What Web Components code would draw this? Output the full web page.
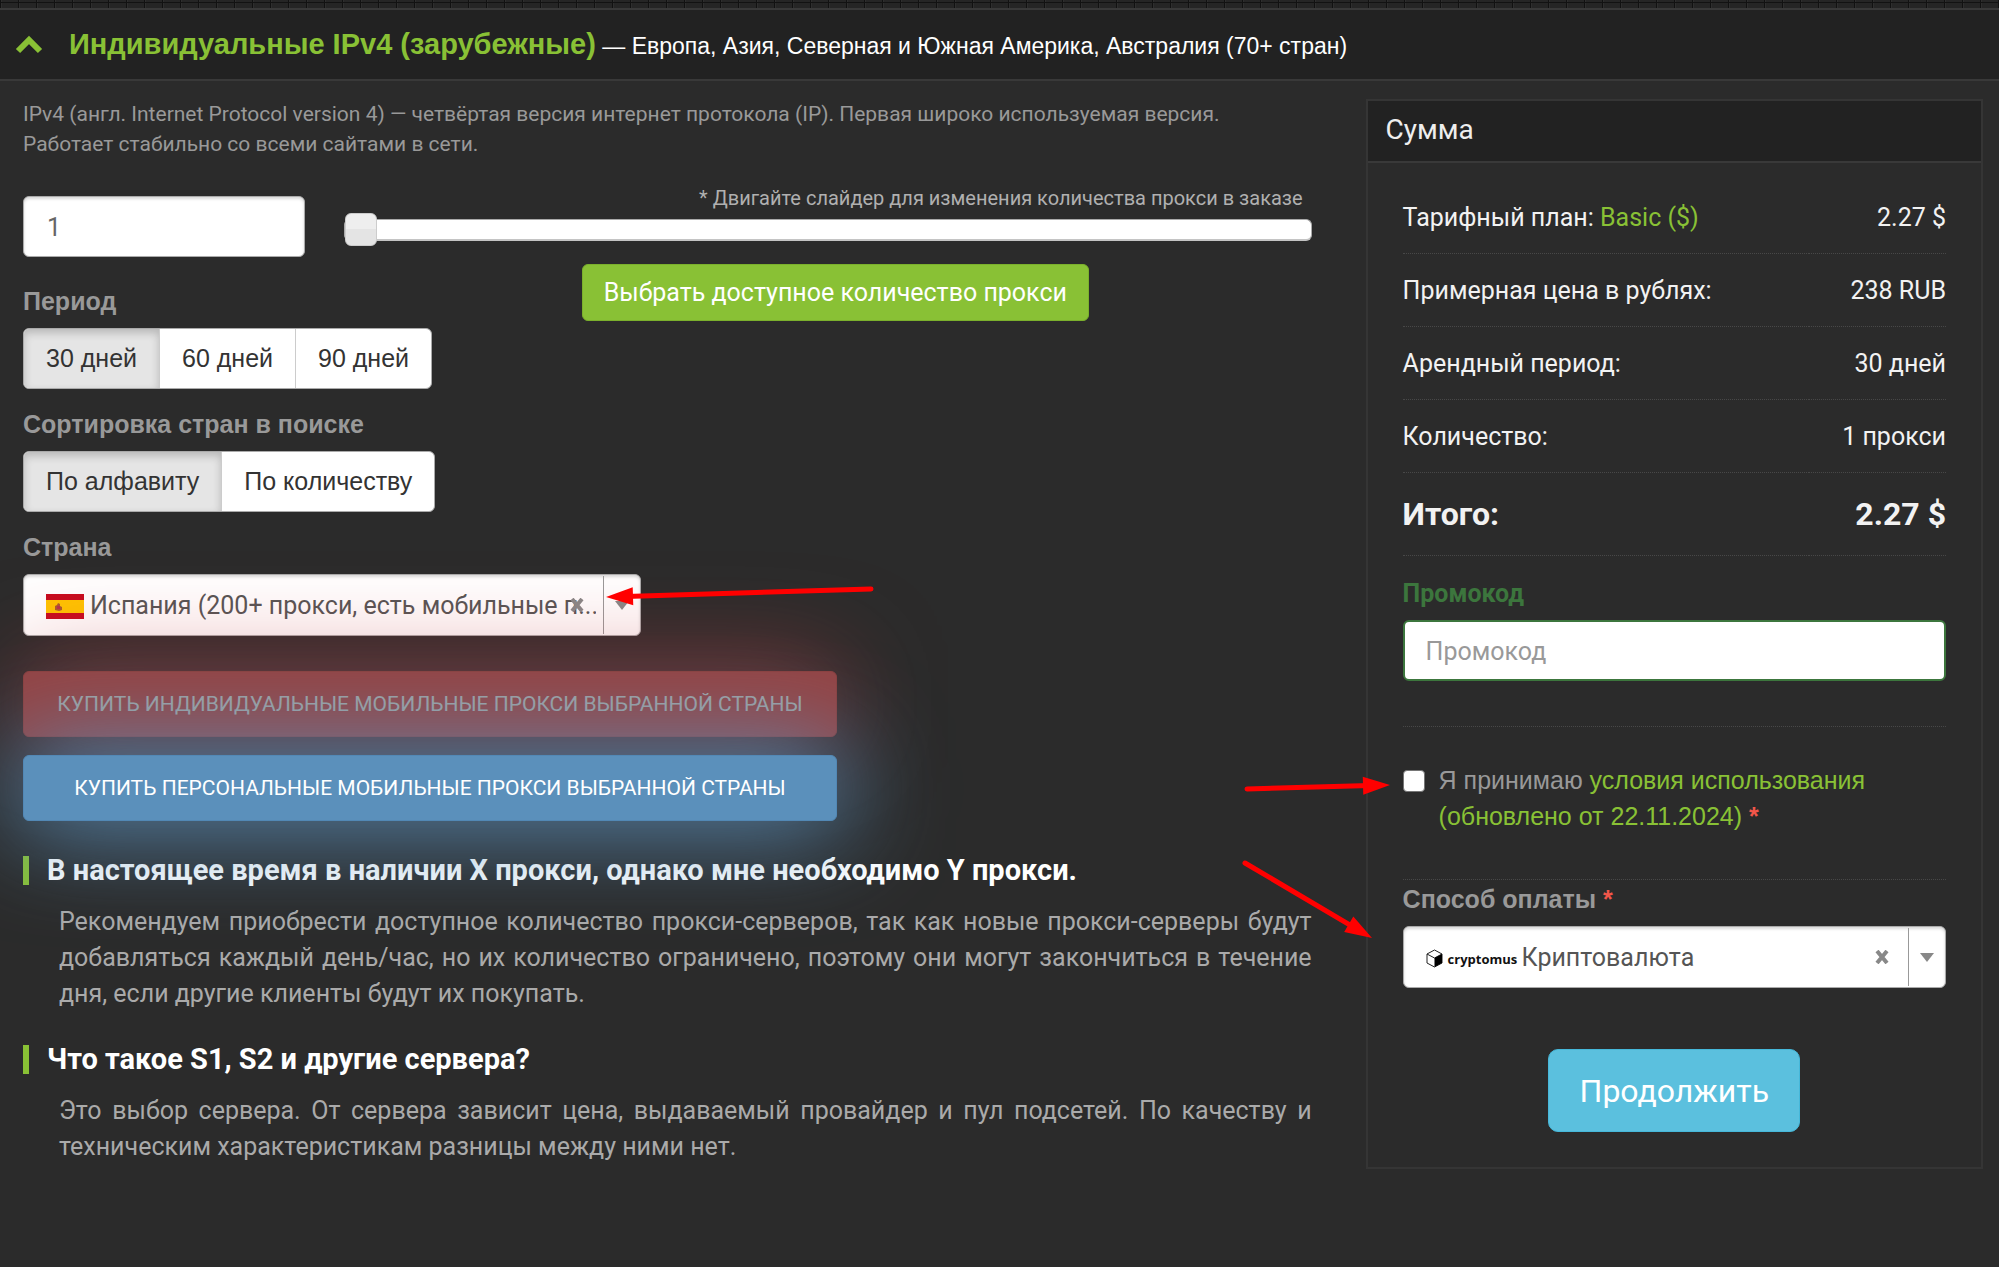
<!DOCTYPE html>
<html lang="ru">
<head>
<meta charset="utf-8">
<meta name="viewport" content="width=device-width, initial-scale=1">
<title>Индивидуальные IPv4</title>
<style>
  html { background: #2b2b2b; }
  body {
    margin: 0;
    color: #999;
    font: 25px/36px Roboto, "Liberation Sans", sans-serif;
    --arial: "Liberation Sans", Arial, sans-serif;
    --green: #89c135;
    --line: #393939;
    --star: #f2564a;
  }
</style>
</head>
<body>
<proxy-page></proxy-page>

<script>
const define = (name, html, init) => {
  const tpl = document.createElement('template');
  tpl.innerHTML = html;
  customElements.define(name, class extends HTMLElement {
    constructor() {
      super();
      this.attachShadow({ mode: 'open' }).append(tpl.content.cloneNode(true));
    }
    connectedCallback() { if (init) init(this, this.shadowRoot); }
  });
};

/* Red annotation arrow, placed by its host over the content it points at */
define('pointer-arrow', `
  <style>
    :host { display: block; position: absolute; z-index: 5; pointer-events: none; }
    svg { display: block; overflow: visible; }
  </style>
  <svg width="1" height="1" aria-hidden="true">
    <line stroke="#f00" stroke-width="5" stroke-linecap="round"/>
    <polygon fill="#f00" points="0,0 -27,-9 -27,9"/>
  </svg>`, (host, root) => {
  const dx = +host.getAttribute('dx'), dy = +host.getAttribute('dy');
  const len = Math.hypot(dx, dy), k = (len - 20) / len;
  const line = root.querySelector('line');
  line.setAttribute('x1', -dx); line.setAttribute('y1', -dy);
  line.setAttribute('x2', -dx + dx * k); line.setAttribute('y2', -dy + dy * k);
  root.querySelector('polygon').setAttribute('transform', 'rotate(' + Math.atan2(dy, dx) * 180 / Math.PI + ')');
});

define('page-heading', `
  <style>
    :host { display: block; }
    .grid {
      height: 8px; background-color: #252525;
      background-image: linear-gradient(#121212, #121212), repeating-linear-gradient(90deg, #111 0 1px, #2e2e2e 1px 2px, transparent 2px 18px);
      background-size: 100% 1px, 100% 100%; background-position: 0 2px, 0 0; background-repeat: no-repeat;
    }
    header {
      display: flex; align-items: center; gap: 26px; box-sizing: border-box; min-height: 73px; padding: 0 15px;
      background: #222; border-top: 2px solid var(--line); border-bottom: 2px solid var(--line);
    }
    h1 { margin: 0; font: 400 23px/36px var(--arial); color: #fff; }
    strong { font: 700 29px/36px var(--arial); color: var(--green); }
    svg { flex: none; }
  </style>
  <div class="grid"></div>
  <header>
    <svg width="28" height="20" viewBox="0 0 28 20" aria-hidden="true"><path d="M3 16 14 5 25 16" fill="none" stroke="#89c135" stroke-width="6"/></svg>
    <h1><strong>Индивидуальные IPv4 (зарубежные)</strong> — Европа, Азия, Северная и Южная Америка, Австралия (70+ стран)</h1>
  </header>`);

/* Row of joined radio buttons */
define('segmented-choice', `
  <style>
    :host { display: block; }
    fieldset { margin: 0; padding: 0; border: 0; min-width: 0; }
    legend { padding: 0; margin-bottom: 10px; font: 700 25px/34px var(--arial); }
    .row { display: inline-flex; vertical-align: top; height: 61px; box-sizing: border-box; border: 1px solid #aaa; border-radius: 6px; overflow: hidden; background: #fff; }
    label { display: flex; align-items: center; padding: 0 22px 2px; color: #333; font: 25px/36px var(--arial); cursor: pointer; }
    label + label { border-left: 1px solid #ccc; }
    label:has(:checked) { background: #e5e5e5; box-shadow: inset 0 4px 9px rgba(0,0,0,.2); }
    input { position: absolute; opacity: 0; width: 1px; height: 1px; margin: 0; }
  </style>
  <fieldset><legend></legend><div class="row"></div></fieldset>`, (host, root) => {
  root.querySelector('legend').textContent = host.getAttribute('caption');
  const row = root.querySelector('.row');
  host.getAttribute('options').split('|').forEach((text, i) => {
    const label = document.createElement('label');
    const radio = document.createElement('input');
    radio.type = 'radio'; radio.name = 'choice'; radio.checked = i === 0;
    label.append(radio, text);
    row.append(label);
  });
});

/* Drop-down with an icon slot, a clear button and a divided arrow */
define('pick-list', `
  <style>
    :host { display: block; }
    label { display: block; margin-bottom: 10px; font: 700 25px/34px var(--arial); }
    i { font-style: normal; color: var(--star); }
    .box { position: relative; display: flex; align-items: center; height: 62px; box-sizing: border-box; background: #fff; border: 1px solid #aaa; border-radius: 6px; box-shadow: inset 0 2px 3px rgba(0,0,0,.15); }
    select { position: absolute; inset: 0; width: 100%; height: 100%; appearance: none; border: 0; background: none; color: #555; font: 25px/36px Roboto, sans-serif; padding: 2px 44px 0 var(--indent, 66px); }
    slot { display: flex; align-items: center; padding-top: 3px; }
    ::slotted(*) { pointer-events: none; margin-left: 22px; }
    button { position: absolute; right: 54px; display: grid; place-items: center; width: 18px; height: 30px; padding: 0; border: 0; background: none; color: #888; }
    .arrow { position: absolute; right: 0; width: 36px; height: 58px; border-left: 1px solid #999; display: grid; place-items: center; pointer-events: none; }
  </style>
  <label for="s"></label>
  <div class="box">
    <select id="s"><option></option></select>
    <slot></slot>
    <button type="button" aria-label="Очистить"><svg width="14" height="14" viewBox="0 0 14 14"><path d="M2 1 12 13M12 1 2 13" stroke="#888" stroke-width="4"/></svg></button>
    <span class="arrow"><svg width="14" height="9"><path d="M0 0H14L7 9Z" fill="#888"/></svg></span>
  </div>`, (host, root) => {
  root.querySelector('label').textContent = host.getAttribute('caption');
  if (host.hasAttribute('required')) {
    const star = document.createElement('i');
    star.textContent = ' *';
    root.querySelector('label').append(star);
  }
  root.querySelector('option').textContent = host.getAttribute('value');
});

define('amount-picker', `
  <style>
    :host { display: block; }
    label { display: block; text-align: right; padding-right: 9px; font: 400 20px/28px Roboto, sans-serif; color: #b0b0b0; }
    input { display: block; appearance: none; width: 100%; height: 33px; margin: 1px 0 18px; background: none; }
    input::-webkit-slider-runnable-track { height: 22px; box-sizing: border-box; background: #fff; border: 1px solid #aaa; border-bottom: 2px solid #c4c4c4; border-radius: 6px; }
    input::-webkit-slider-thumb { appearance: none; width: 32px; height: 33px; box-sizing: border-box; margin-top: -7px; border: 1px solid #ccc; border-radius: 6px; background: linear-gradient(#eee 50%, #e4e4e4 50%); }
    .action { display: flex; justify-content: center; padding-left: 15px; }
    button { height: 57px; padding: 1px 21px 0; border: 1px solid #7bb02c; border-radius: 6px; background: var(--green); color: #fff; font: 25px/36px Roboto, sans-serif; }
  </style>
  <label for="r">* Двигайте слайдер для изменения количества прокси в заказе</label>
  <input id="r" type="range" min="1" max="200" value="1">
  <div class="action"><button type="button">Выбрать доступное количество прокси</button></div>`);

define('glow-button', `
  <style>
    :host { display: block; position: relative; z-index: 1; max-width: 814px; pointer-events: none; }
    :host([disabled]) { opacity: .65; }
    button { pointer-events: auto; width: 100%; height: 66px; padding: 0; border: 1px solid #5288b5; border-radius: 6px; background: #5b90bb; color: #fff; box-shadow: 0 0 100px 8px #5b90bb; font: 400 21px/36px Roboto, sans-serif; text-transform: uppercase; }
    :host([disabled]) button { border-color: #c24a48; background: #cc5150; color: #e2e2e2; box-shadow: 0 0 100px #cc4448; }
  </style>
  <button type="button"><slot></slot></button>`);

define('faq-item', `
  <style>
    :host { display: block; }
    h2 { margin: 0 0 19px; padding-left: 18px; border-left: 6px solid var(--green); font: 700 29px/29px Roboto, sans-serif; color: #fff; }
    p { margin: 0; padding-left: 36px; color: #aaa; text-align: justify; }
  </style>
  <h2><slot name="question"></slot></h2>
  <p><slot></slot></p>`);

define('order-form', `
  <style>
    :host { display: block; }
    .about { margin: 0 0 25px; font: 21px/30px Roboto, sans-serif; }
    .top { display: grid; grid-template-columns: 282px 1fr; column-gap: 39px; }
    .count { display: block; width: 100%; height: 61px; box-sizing: border-box; margin-top: 12px; padding: 2px 23px 0; border: 1px solid #aaa; border-radius: 6px; box-shadow: inset 0 2px 3px rgba(0,0,0,.15); font: 25px/36px Roboto, sans-serif; color: #666; }
    amount-picker { grid-area: 1 / 2 / span 2; align-self: start; }
    .period { grid-area: 2 / 1 / auto / span 2; margin-top: 27px; justify-self: start; }
    .field { margin-top: 18px; }
    .country { position: relative; max-width: 618px; }
    .buy { margin: 35px 0; display: grid; gap: 18px; }
    faq-item + faq-item { margin-top: 33px; }
    .country pointer-arrow { left: 583px; top: 67px; }
  </style>
  <p class="about">IPv4 (англ. Internet Protocol version 4) — четвёртая версия интернет протокола (IP). Первая широко используемая версия.<br>Работает стабильно со всеми сайтами в сети.</p>
  <div class="top">
    <input class="count" type="text" value="1" aria-label="Количество прокси">
    <amount-picker></amount-picker>
    <segmented-choice class="period" caption="Период" options="30 дней|60 дней|90 дней"></segmented-choice>
  </div>
  <segmented-choice class="field" caption="Сортировка стран в поиске" options="По алфавиту|По количеству"></segmented-choice>
  <div class="field country">
    <pick-list caption="Страна" value="Испания (200+ прокси, есть мобильные п...">
      <svg width="38" height="25" viewBox="0 0 38 25" aria-hidden="true">
        <rect width="38" height="25" fill="#c60b1e"/><rect y="6" width="38" height="13" fill="#ffc400"/>
        <path d="M9 16v-4l2-1 1-2 2 1v2l2 1v3l-3 1z" fill="#ad5a2c"/><path d="M11 12h3v3h-3z" fill="#b8324a"/>
      </svg>
    </pick-list>
    <pointer-arrow dx="-265" dy="8"></pointer-arrow>
  </div>
  <div class="buy">
    <glow-button disabled>Купить индивидуальные мобильные прокси выбранной страны</glow-button>
    <glow-button>Купить персональные мобильные прокси выбранной страны</glow-button>
  </div>
  <faq-item>
    <span slot="question">В настоящее время в наличии X прокси, однако мне необходимо Y прокси.</span>
    Рекомендуем приобрести доступное количество прокси-серверов, так как новые прокси-серверы будут добавляться каждый день/час, но их количество ограничено, поэтому они могут закончиться в течение дня, если другие клиенты будут их покупать.
  </faq-item>
  <faq-item>
    <span slot="question">Что такое S1, S2 и другие сервера?</span>
    Это выбор сервера. От сервера зависит цена, выдаваемый провайдер и пул подсетей. По качеству и техническим характеристикам разницы между ними нет.
  </faq-item>`);

define('order-summary', `
  <style>
    :host { display: block; position: relative; box-sizing: border-box; border: 2px solid #353535; }
    h2 { margin: 0; height: 60px; padding: 0 18px; background: #222; border-bottom: 2px solid var(--line); color: #eee; font: 400 28px/58px Roboto, sans-serif; }
    .body { padding: 18px 35px 35px; }
    table { width: 100%; border-spacing: 0; color: #f2f2f2; }
    th, td { padding: 19px 0 17px; border-bottom: 1px dotted #484848; font-weight: 400; text-align: left; }
    td { text-align: right; }
    .total > * { padding: 18px 0; font: 700 32px/46px Roboto, sans-serif; }
    a { color: var(--green); text-decoration: none; }
    .promo { padding: 20px 0 45px; border-bottom: 1px dotted #484848; }
    .promo label { display: block; margin-bottom: 8px; color: #3c763d; font: 700 25px/36px Roboto, sans-serif; }
    .promo input { display: block; width: 100%; height: 61px; box-sizing: border-box; padding: 2px 21px 0; border: 2px solid #3c763d; border-radius: 6px; background: #fff; font: 25px/36px Roboto, sans-serif; }
    .promo input::placeholder { color: #999; }
    .terms { display: flex; gap: 14px; padding: 35px 0 45px; border-bottom: 1px dotted #484848; font: 25px/36px var(--arial); }
    .terms input { appearance: none; flex: none; width: 22px; height: 22px; margin: 8px 0 0 0; border: 1px solid #767676; border-radius: 4px; background: #fff; }
    .terms i { font-style: normal; font-weight: 700; color: var(--star); }
    .brand { display: flex; align-items: center; gap: 5px; font: 700 13px/18px "Open Sans", sans-serif; color: #111; }
    pick-list { --indent: 118px; margin-top: 2px; }
    .go { display: block; width: 252px; height: 83px; margin: 61px auto 0; padding: 0; border: 1px solid #46b8da; border-radius: 10px; background: #5bc0de; color: #fff; font: 32px/42px Roboto, sans-serif; }
    .to-terms { left: 22px; top: 684px; }
    .to-pay { left: 4px; top: 837px; }
  </style>
  <h2>Сумма</h2>
  <div class="body">
    <table>
      <tr><th scope="row">Тарифный план: <a href="#plan">Basic ($)</a></th><td>2.27 $</td></tr>
      <tr><th scope="row">Примерная цена в рублях:</th><td>238 RUB</td></tr>
      <tr><th scope="row">Арендный период:</th><td>30 дней</td></tr>
      <tr><th scope="row">Количество:</th><td>1 прокси</td></tr>
      <tr class="total"><th scope="row">Итого:</th><td>2.27 $</td></tr>
    </table>
    <div class="promo"><label for="promo">Промокод</label><input id="promo" type="text" placeholder="Промокод"></div>
    <div class="terms">
      <input id="agree" type="checkbox">
      <label for="agree">Я принимаю <a href="#terms">условия использования (обновлено от 22.11.2024)</a> <i>*</i></label>
    </div>
    <pick-list caption="Способ оплаты" required value="Криптовалюта">
      <span class="brand">
        <svg width="17" height="19" viewBox="0 0 17 19" aria-hidden="true"><path d="M8.500 1 16 5v9l-7.500 4L1 14V5z" fill="#fff" stroke="#222"/><path d="M1 5l7.500 4L16 5" fill="none" stroke="#222"/><path d="M8.500 9 16 5v9l-7.500 4z" fill="#000"/></svg>
        <span>cryptomus</span>
      </span>
    </pick-list>
    <button class="go" type="button">Продолжить</button>
  </div>
  <pointer-arrow class="to-terms" dx="143" dy="-4"></pointer-arrow>
  <pointer-arrow class="to-pay" dx="127" dy="75"></pointer-arrow>`);

define('proxy-page', `
  <style>
    :host { display: block; }
    main { display: flex; align-items: flex-start; gap: 54px; padding: 18px 16px 18px 23px; }
    order-form { flex: 1; min-width: 0; }
    order-summary { flex: 0 0 31.5%; }
  </style>
  <page-heading></page-heading>
  <main>
    <order-form></order-form>
    <order-summary></order-summary>
  </main>`);
</script>
</body>
</html>
